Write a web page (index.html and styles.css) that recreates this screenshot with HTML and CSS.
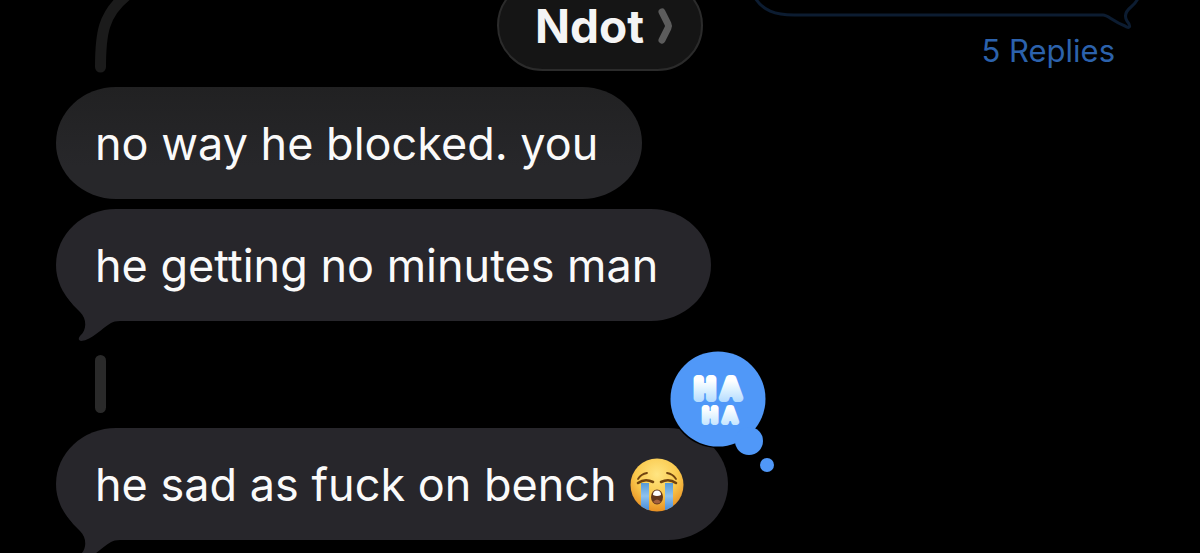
FILE: index.html
```
<!DOCTYPE html>
<html lang="en">
<head>
<meta charset="utf-8">
<meta name="viewport" content="width=device-width, initial-scale=1">
<title>Ndot</title>
<link rel="stylesheet" href="styles.css">
</head>
<body>
<header class="contact-bar">
  <button class="contact" type="button">
    <span>Ndot</span>
    <svg class="chevron" width="16" height="38" viewBox="0 0 16 38" aria-hidden="true"><path d="M5 5 L11 17 Q12 19 11 21 L5 33"/></svg>
  </button>
</header>
<main class="chat">
  <section class="thread">
    <svg class="thread-line" width="60" height="73" viewBox="0 0 60 73" aria-hidden="true"><path d="M5.500 67 C5.500 34 8 14 32 -5"/></svg>
    <div class="sent">
      <svg class="sent-outline" width="390" height="32" viewBox="0 0 390 32" aria-hidden="true"><path d="M0 -4 C8 11 22 15 40 15 H349 C354 15 358 21 371 26 C375 29 378 27 373 21 C370 16 372 11 377 7 Q383 2 385 -4"/></svg>
      <a class="replies" href="#replies">5 Replies</a>
    </div>
  </section>
  <div class="bubble faded"><p>no way he blocked. you</p></div>
  <div class="bubble">
    <p>he getting no minutes man</p>
    <svg class="tail" width="70" height="44" viewBox="0 0 70 44" aria-hidden="true"><path d="M11 0 Q17 9 24 15 C31 22 31 33 24 39 Q21 43 25 44 C36 43 46 31 55 26 Q58 24 64 24 V0Z"/></svg>
  </div>
  <div class="reply-link"></div>
  <div class="bubble last">
    <p>he sad as fuck on bench</p>
    <svg class="emoji" width="54" height="54" viewBox="0 0 54 54" role="img" aria-label="Loudly crying face">
      <defs>
        <radialGradient id="face" cx=".5" cy=".3" r=".72"><stop offset="0" stop-color="#ffe582"/><stop offset=".55" stop-color="#fac94d"/><stop offset="1" stop-color="#e58b20"/></radialGradient>
        <linearGradient id="tear" x2="0" y2="1"><stop stop-color="#559ad8"/><stop offset=".45" stop-color="#8fc2ed"/><stop offset="1" stop-color="#3d85d8"/></linearGradient>
        <clipPath id="round"><circle cx="27" cy="27" r="26.500"/></clipPath>
      </defs>
      <circle cx="27" cy="27" r="26.500" fill="url(#face)"/>
      <g clip-path="url(#round)"><path d="M11 25 H19 V54 H11Z M35 25 H43 V54 H35Z" fill="url(#tear)"/></g>
      <g fill="none" stroke="#70430f" stroke-linecap="round"><path d="M8 21 Q11 16 17 15 M37 15 Q43 16 46 21" stroke-width="1.800"/><path d="M8 25 Q15 20 23 24 M31 24 Q39 20 46 25" stroke-width="2.600"/></g>
      <ellipse cx="27" cy="39" rx="6" ry="7.500" fill="#63371c"/>
      <path d="M23 37 Q23 32.500 27 32.500 T31 37 Q27 39 23 37Z" fill="#fff"/>
      <path d="M23 44 Q27 39 31 44 Q27 47 23 44Z" fill="#a5613e"/>
    </svg>
    <svg class="tail" width="70" height="44" viewBox="0 0 70 44" aria-hidden="true"><path d="M11 0 Q17 9 24 15 C31 22 31 33 24 39 Q21 43 25 44 C36 43 46 31 55 26 Q58 24 64 24 V0Z"/></svg>
    <svg class="reaction" width="110" height="124" viewBox="0 0 110 124" role="img" aria-label="Haha reaction">
      <defs><linearGradient id="puff" gradientUnits="userSpaceOnUse" x1="0" y1="26" x2="0" y2="54" spreadMethod="repeat"><stop offset=".2" stop-color="#fff"/><stop offset=".5" stop-color="#e0f3ff"/><stop offset=".95" stop-color="#b5dcff"/></linearGradient></defs>
      <circle cx="50" cy="50" r="49"/>
      <g fill="#5098f8"><circle cx="50" cy="50" r="47.500"/><circle cx="81" cy="92" r="14"/><circle cx="99" cy="116" r="7"/></g>
      <text class="haha" fill="url(#puff)" stroke="url(#puff)" text-anchor="middle"><tspan x="37 63" y="49" font-size="26" stroke-width="8">HA</tspan><tspan x="42 62" y="73" font-size="19" stroke-width="6">HA</tspan></text>
    </svg>
  </div>
</main>
</body>
</html>
```
FILE: styles.css
```
* { box-sizing: border-box; }
body {
  margin: 0;
  min-height: 100vh;
  background: #000;
  color: #fafafa;
  font-family: Inter, "Liberation Sans", sans-serif;
}
.contact-bar {
  position: absolute;
  z-index: 2;
  top: -20px;
  left: 0;
  right: 0;
  display: flex;
  justify-content: center;
}
.contact {
  display: flex;
  align-items: center;
  gap: 13px;
  height: 91px;
  padding: 0 28px 0 36px;
  border: 2px solid #2b2b2b;
  border-radius: 48px;
  background: #151515;
  color: #f4f4f4;
  font: 700 46px/48px Inter, "Liberation Sans", sans-serif;
}
.chevron path { fill: none; stroke: #5c5c5c; stroke-width: 7; stroke-linecap: round; stroke-linejoin: round; }
.chat {
  display: flex;
  flex-direction: column;
  align-items: flex-start;
  height: 100vh;
  padding-left: 56px;
  overflow: hidden;
}
.thread {
  display: flex;
  flex: none;
  justify-content: space-between;
  align-self: stretch;
  height: 87px;
  padding: 0 56px 0 39px;
}
.thread-line path { fill: none; stroke: #1b1b1b; stroke-width: 11; stroke-linecap: round; }
.sent { display: flex; flex-direction: column; align-items: flex-end; }
.sent-outline path { fill: none; stroke: #0c1c31; stroke-width: 3; stroke-linejoin: round; }
.replies {
  padding-right: 29px;
  color: #2c62ac;
  font-size: 31px;
  line-height: 38px;
  text-decoration: none;
}
.bubble {
  position: relative;
  display: flex;
  flex: none;
  align-items: center;
  gap: 13px;
  min-height: 112px;
  padding: 2px 53px 0 39px;
  border-radius: 60px / 56px;
  background: #27262b;
  font-size: 45px;
  line-height: 56px;
}
.bubble p { margin: 0; white-space: nowrap; }
.faded { margin-bottom: 10px; padding-right: 44px; background: linear-gradient(#212122, #27272a 70%); }
.tail { position: absolute; left: 0; bottom: -20px; fill: #27262b; }
.reply-link { flex: none; width: 11px; height: 58px; margin: 34px 0 15px 39px; border-radius: 6px; background: #2a2a2a; }
.last { padding-right: 44px; }
.reaction { position: absolute; right: -50px; top: -79px; }
.haha { font-family: Inter, "Liberation Sans", sans-serif; font-weight: 400; stroke-linejoin: round; }
```
